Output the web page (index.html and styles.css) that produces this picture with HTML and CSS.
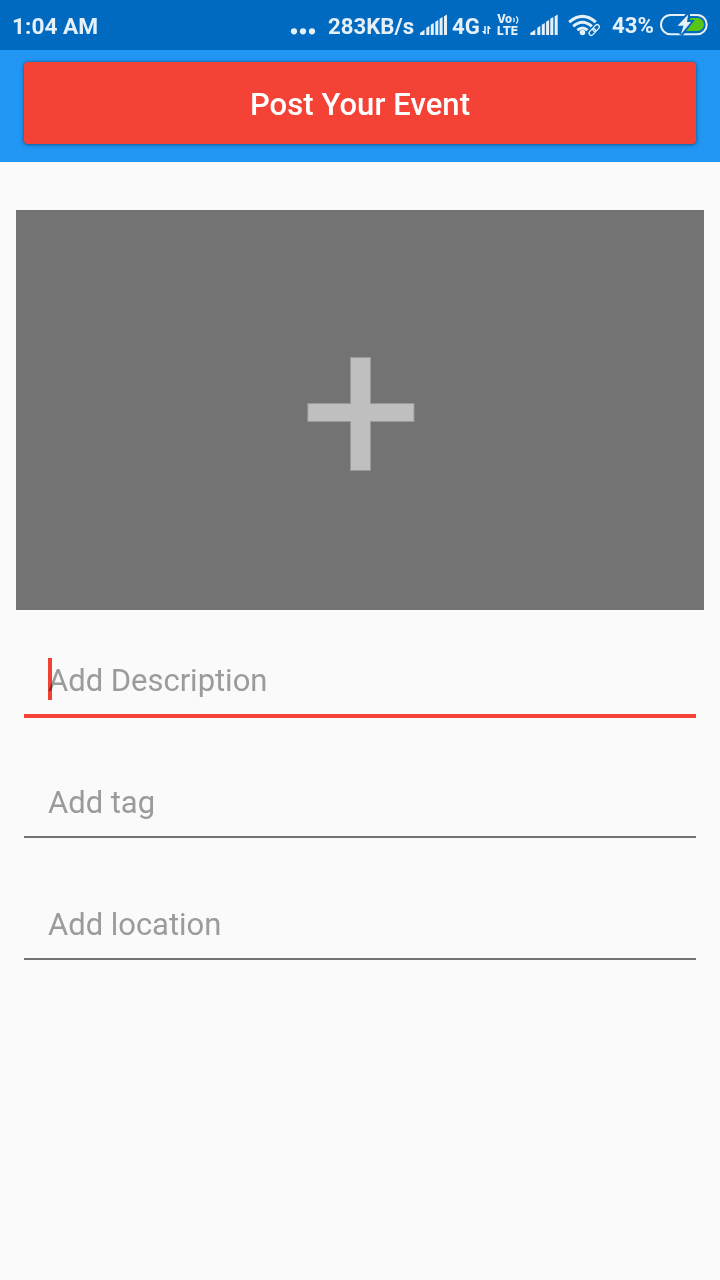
FILE: index.html
```html
<!DOCTYPE html>
<html lang="en">
<head>
<meta charset="utf-8">
<title>Post Your Event</title>
<link rel="stylesheet" href="styles.css">
</head>
<body>
<header class="status-bar">
  <span class="clock">1:04 AM</span>
  <div class="indicators">
    <svg class="dots" width="26" height="50" viewBox="0 0 26 50"><circle cx="4" cy="31.3" r="3.1"/><circle cx="13" cy="31.3" r="3.1"/><circle cx="22" cy="31.3" r="3.1"/></svg>
    <span class="speed">283KB/s</span>
    <svg class="signal" width="28" height="50" viewBox="0 0 28 50"><path d="M0 35v-2l4.5-3.2V35zM6.3 35v-7.2l3-1.8v9zM10.8 35V24.8l3-1.8v12zM15.3 35V21.7l3-1.8V35zM19.6 35V18.7l3-1.8V35zM24 35V16.2l3-1.6V35z"/></svg>
    <span class="network">4G</span>
    <svg class="arrows" width="9" height="50" viewBox="0 0 9 50"><path d="M2.2 26h1.6v8H2.2L0 31h2.2zM5.4 34v-8H7l2 3H7v5z"/></svg>
    <span class="volte"><span class="vo">Vo<svg width="6" height="8" viewBox="0 0 6 8"><path d="M.4 2Q2 4 .4 6M3.2.4Q6.4 4 3.2 7.6" fill="none" stroke="currentColor" stroke-width="1.3"/></svg></span><span class="lte">LTE</span></span>
    <svg class="signal second" width="28" height="50" viewBox="0 0 28 50"><path d="M0.3 35v-2l5-3.2V35zM7.3 35v-7.2l3-1.8v9zM11.8 35V24.8l3-1.8v12zM16.1 35V21.7l3-1.8V35zM20.3 35V18.7l3-1.8V35zM24.7 35V16.2l3-1.6V35z"/></svg>
    <svg class="wifi" width="33" height="50" viewBox="0 0 33 50"><g fill="none" stroke="currentColor" stroke-width="3"><path d="M1.2 22.2Q14.5 10.5 27.8 22.2M5.2 26.4Q14.5 18 23.8 26.4M9.4 30.2Q14.5 25.7 19.6 30.2"/></g><circle cx="14.5" cy="32.5" r="2.8"/><g transform="rotate(-47 26.2 30)" fill="none"><path stroke="#0069c0" stroke-width="6" d="M20.5 30h11.5"/><rect x="19.7" y="27.8" width="7.5" height="4.4" rx="2.2" stroke="currentColor" stroke-width="1.3"/><rect x="25.2" y="27.8" width="7.5" height="4.4" rx="2.2" stroke="currentColor" stroke-width="1.3"/></g></svg>
    <span class="percent">43%</span>
    <svg class="battery" width="48" height="50" viewBox="0 0 48 50"><rect x="1" y="15" width="45.7" height="19.3" rx="9.6" fill="none" stroke="currentColor" stroke-width="2"/><path class="charge" d="M30.5 18h7a6.5 6.5 0 0 1 0 13H26z"/><path d="M28 14.5 17.8 25.5h6L21 34.5 30.7 22H27.2z" stroke="#0069c0" stroke-width="4"/><path d="M28.2 14.5 17.5 25.8h6L20.8 34.5 31 22h-4z"/></svg>
  </div>
</header>
<div class="app-bar"><button class="post-button">Post Your Event</button></div>
<main class="content">
  <div class="photo"><svg width="108" height="115" viewBox="0 0 108 115"><path class="plus-edge" d="M43 0h21v46h43.5v19H64v49H43V65H.3V46H43z"/><path d="M44 1h19v46h43.5v17H63v49H44V64H1.3V47H44z"/></svg></div>
  <div class="fields">
    <div class="field focused"><span class="hint">Add Description</span><i class="cursor"></i></div>
    <div class="field"><span class="hint">Add tag</span></div>
    <div class="field"><span class="hint">Add location</span></div>
  </div>
</main>
</body>
</html>
```
FILE: styles.css
```css
* { box-sizing: border-box; }
body { margin: 0; width: 720px; height: 1280px; background: #fafafa; font-family: Roboto, sans-serif; overflow: hidden; }
svg { display: block; flex: none; fill: currentColor; }
.status-bar { height: 50px; display: flex; justify-content: space-between; background: #0069c0; color: #e5f0f9; padding: 0 12px; line-height: 53px; white-space: nowrap; font-size: 22.2px; font-weight: 700; }
.indicators { display: flex; }
.clock { font-size: 22.7px; }
.speed { width: 86px; margin-left: 12px; }
.signal { margin-left: 6px; }
.network { width: 29px; margin-left: 4px; }
.arrows { margin-left: 1px; }
.volte { display: flex; flex-direction: column; width: 24px; margin: 14px 0 0 6px; font: 800 12px/11px Inter, sans-serif; }
.vo { display: flex; align-items: center; gap: 1px; height: 11px; font-size: 11.5px; line-height: 11px; }
.lte { line-height: 12px; }
.second { margin-left: 9px; }
.wifi { margin-left: 10px; }
.percent { width: 42px; margin-left: 11px; line-height: 51px; }
.battery { margin: 0 0 0 6px; }
.charge { fill: #57c516; }
.app-bar { height: 112px; padding: 12px 24px 18px; background: #2196f3; }
.post-button { display: block; width: 672px; height: 82px; padding: 3px 0 0; border: 0; border-radius: 4px; background: #f44336; color: #fff; font: 500 31px/37px Roboto, sans-serif; letter-spacing: .07px; box-shadow: 0 1px 4px rgba(0,0,0,.3), 0 0 3px rgba(0,0,0,.3); }
.content { padding: 48px 16px 0; }
.photo { display: flex; justify-content: center; height: 400px; padding: 147px 0 0 2px; background: #737373; color: #bfbfbf; }
.plus-edge { fill: #999; }
.fields { padding: 32px 8px 0; }
.field { position: relative; height: 74px; margin-bottom: 48px; padding: 20px 24px 0; border-bottom: 2px solid #737373; }
.focused { height: 76px; margin-bottom: 46px; border-bottom: 4px solid #f44336; }
.hint { display: block; color: #9b9b9b; font-size: 31px; line-height: 37px; letter-spacing: -.03px; }
.cursor { position: absolute; left: 24px; top: 16px; width: 4px; height: 42px; background: #f44336; mix-blend-mode: multiply; }
```
